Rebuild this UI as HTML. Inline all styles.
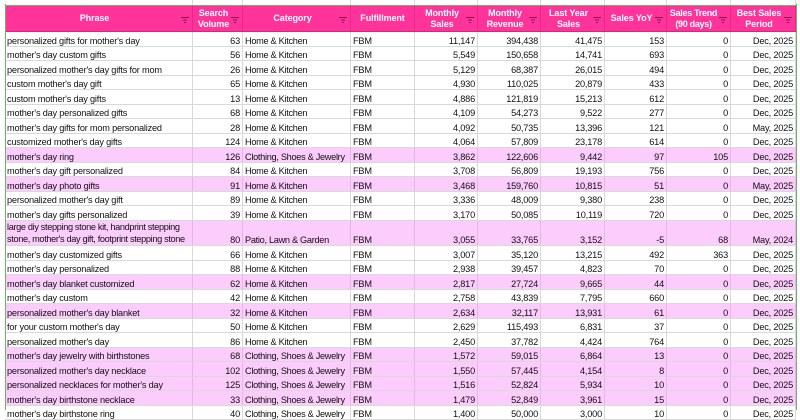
<!DOCTYPE html><html><head><style>
*{margin:0;padding:0;box-sizing:border-box}
body{width:800px;height:410px;overflow:hidden;background:#fff;font-family:"Liberation Sans",sans-serif;font-size:9.2px;letter-spacing:-0.2px;color:#111;position:relative}
.grid{position:absolute;left:5px;top:0}
.r{display:flex;height:14.5px;border-bottom:1px solid #d9d9d9}
.c{border-right:1px solid #d9d9d9;padding:0 2px;white-space:nowrap;overflow:hidden;display:flex;align-items:flex-end;padding-bottom:0}
.n{justify-content:flex-end}
.p{background:#fcccfc}
.p .c{border-right-color:#e8b5e8}
.h{height:27px;background:#ff3399;color:#fff;font-weight:bold;border-bottom:1px solid #e0207f;border-top:1px solid #6cb46c;font-size:9px;letter-spacing:-0.1px}
.h .c{justify-content:center;align-items:center;text-align:center;white-space:normal;line-height:11px;border-right:1px solid #e82887;position:relative;padding:0 11px 0 3px}
.h .c svg{position:absolute;right:3px;top:11px}
.w0{width:188px}.w1{width:50px}.w2{width:108px}.w3{width:64px}.w4{width:63px}.w5{width:63px}.w6{width:64px}.w7{width:62px}.w8{width:64px}.w9{width:65px}
.t{height:25.5px}
.top{height:5px;border-bottom:none}
.gl{position:absolute;left:5px;top:4px;width:1px;height:406px;background:#6cb46c}
.gr{position:absolute;left:796px;top:4px;width:1px;height:406px;background:#6cb46c}
</style></head><body>
<div class="grid">
<div class="r top"><div class="c w0"></div><div class="c w1"></div><div class="c w2"></div><div class="c w3"></div><div class="c w4"></div><div class="c w5"></div><div class="c w6"></div><div class="c w7"></div><div class="c w8"></div><div class="c w9"></div></div>
<div class="r h">
<div class="c w0">Phrase<svg width="8" height="6"><path d="M0 .5h8M2 3h4M3 5.5h2" stroke="#7a1a4a" stroke-width="1"/></svg></div>
<div class="c w1">Search Volume<svg width="8" height="6"><path d="M0 .5h8M2 3h4M3 5.5h2" stroke="#7a1a4a"/></svg></div>
<div class="c w2">Category<svg width="8" height="6"><path d="M0 .5h8M2 3h4M3 5.5h2" stroke="#7a1a4a"/></svg></div>
<div class="c w3" style="padding:0">Fulfillment</div>
<div class="c w4">Monthly Sales<svg width="8" height="6"><path d="M0 .5h8M2 3h4M3 5.5h2" stroke="#7a1a4a"/></svg></div>
<div class="c w5">Monthly Revenue<svg width="8" height="6"><path d="M0 .5h8M2 3h4M3 5.5h2" stroke="#7a1a4a"/></svg></div>
<div class="c w6">Last Year Sales<svg width="8" height="6"><path d="M0 .5h8M2 3h4M3 5.5h2" stroke="#7a1a4a"/></svg></div>
<div class="c w7">Sales YoY<svg width="8" height="6"><path d="M0 .5h8M2 3h4M3 5.5h2" stroke="#7a1a4a"/></svg></div>
<div class="c w8" style="padding:0 10px 0 0;white-space:nowrap;letter-spacing:-0.3px">Sales Trend<br>(90 days)<svg width="8" height="6"><path d="M0 .5h8M2 3h4M3 5.5h2" stroke="#7a1a4a"/></svg></div>
<div class="c w9">Best Sales Period<svg width="8" height="6"><path d="M0 .5h8M2 3h4M3 5.5h2" stroke="#7a1a4a"/></svg></div>
</div>
<div id="rows"></div>
</div>
<div class="gl"></div><div class="gr"></div>
<script>
var d=[
["personalized gifts for mother's day",63,"H",11147,394438,41475,153,0,"Dec, 2025"],
["mother's day custom gifts",56,"H",5549,150658,14741,693,0,"Dec, 2025"],
["personalized mother's day gifts for mom",26,"H",5129,68387,26015,494,0,"Dec, 2025"],
["custom mother's day gift",65,"H",4930,110025,20879,433,0,"Dec, 2025"],
["custom mother's day gifts",13,"H",4886,121819,15213,612,0,"Dec, 2025"],
["mother's day personalized gifts",68,"H",4109,54273,9522,277,0,"Dec, 2025"],
["mother's day gifts for mom personalized",28,"H",4092,50735,13396,121,0,"May, 2025"],
["customized mother's day gifts",124,"H",4064,57809,23178,614,0,"Dec, 2025"],
["mother's day ring",126,"C",3862,122606,9442,97,105,"Dec, 2025",1],
["mother's day gift personalized",84,"H",3708,56809,19193,756,0,"Dec, 2025"],
["mother's day photo gifts",91,"H",3468,159760,10815,51,0,"May, 2025",1],
["personalized mother's day gift",89,"H",3336,48009,9380,238,0,"Dec, 2025"],
["mother's day gifts personalized",39,"H",3170,50085,10119,720,0,"Dec, 2025"],
["large diy stepping stone kit, handprint stepping<br>stone, mother's day gift, footprint stepping stone",80,"Patio, Lawn &amp; Garden",3055,33765,3152,-5,68,"May, 2024",2],
["mother's day customized gifts",66,"H",3007,35120,13215,492,363,"Dec, 2025"],
["mother's day personalized",88,"H",2938,39457,4823,70,0,"Dec, 2025"],
["mother's day blanket customized",62,"H",2817,27724,9665,44,0,"Dec, 2025",1],
["mother's day custom",42,"H",2758,43839,7795,660,0,"Dec, 2025"],
["personalized mother's day blanket",32,"H",2634,32117,13931,61,0,"Dec, 2025",1],
["for your custom mother's day",50,"H",2629,115493,6831,37,0,"Dec, 2025"],
["personalized mother's day",86,"H",2450,37782,4424,764,0,"Dec, 2025"],
["mother's day jewelry with birthstones",68,"C",1572,59015,6864,13,0,"Dec, 2025",1],
["personalized mother's day necklace",102,"C",1550,57445,4154,8,0,"Dec, 2025",1],
["personalized necklaces for mother's day",125,"C",1516,52824,5934,10,0,"Dec, 2025",1],
["mother's day birthstone necklace",33,"C",1479,52849,3961,15,0,"Dec, 2025",1],
["mother's day birthstone ring",40,"C",1400,50000,3000,10,0,"Dec, 2025"]
];
var f=function(x){return x.toLocaleString('en-US')};var h='';
d.forEach(function(r){var cat=r[2]=="H"?"Home &amp; Kitchen":r[2]=="C"?"Clothing, Shoes &amp; Jewelry":r[2];
var cls='r'+(r[9]?' p':'')+(r[9]==2?' t':'');
var ph=r[9]==2?'<div style="line-height:12px;white-space:nowrap;letter-spacing:-0.35px">'+r[0]+'</div>':r[0];
h+='<div class="'+cls+'"><div class="c w0">'+ph+'</div><div class="c w1 n">'+r[1]+'</div><div class="c w2" style="letter-spacing:-0.3px">'+cat+'</div><div class="c w3">FBM</div><div class="c w4 n">'+f(r[3])+'</div><div class="c w5 n">'+f(r[4])+'</div><div class="c w6 n">'+f(r[5])+'</div><div class="c w7 n">'+r[6]+'</div><div class="c w8 n">'+r[7]+'</div><div class="c w9 n">'+r[8]+'</div></div>';});
document.getElementById('rows').innerHTML=h;
</script>
</body></html>
